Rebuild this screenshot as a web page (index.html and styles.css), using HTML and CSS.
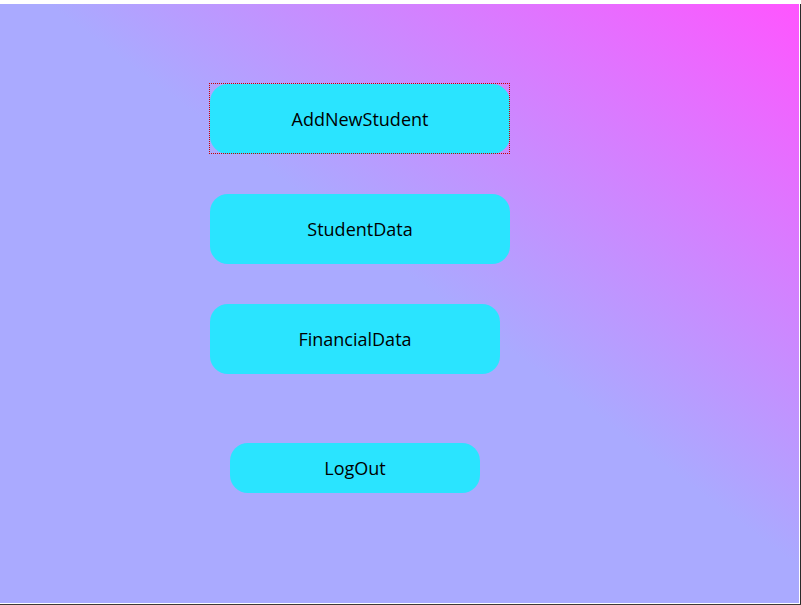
FILE: index.html
```html
<!DOCTYPE html>
<html>
<head>
<meta charset="utf-8">
<link rel="stylesheet" href="styles.css">
<title>Menu</title>
</head>
<body>
<div class="screen">
  <div class="form">
    <div class="menu">
      <button class="btn btn-wide focused">AddNewStudent</button>
      <button class="btn btn-wide">StudentData</button>
      <button class="btn btn-mid">FinancialData</button>
      <button class="btn btn-small">LogOut</button>
    </div>
  </div>
  <div class="edge-right"></div>
</div>
<div class="edge-bottom"></div>
</body>
</html>
```
FILE: styles.css
```css
html, body {
  margin: 0;
  padding: 0;
  background: #ffffff;
  width: 801px;
  height: 605px;
  overflow: hidden;
}
.screen {
  display: flex;
  margin-top: 4px;
  height: 600px;
}
.form {
  width: 799px;
  height: 599px;
  background: linear-gradient(to bottom left, #ff55ff 0%, #aaaaff 47%, #aaaaff 100%);
  box-sizing: border-box;
  padding: 80px 0 0 210px;
}
.edge-right {
  width: 1px;
  height: 600px;
  margin-left: 1px;
  background: #2a2a2a;
}
.edge-bottom {
  height: 1px;
  background: #3c3a34;
}
.menu {
  display: flex;
  flex-direction: column;
  align-items: flex-start;
}
.btn {
  position: relative;
  border: none;
  background: #2ae4ff;
  color: #000;
  font-family: "Open Sans", "Noto Sans", sans-serif;
  font-size: 18px;
  padding: 0;
  border-radius: 18px;
  margin: 0;
  cursor: pointer;
  outline: none;
}
.btn-wide {
  width: 300px;
  height: 70px;
  margin-bottom: 40px;
}
.btn-mid {
  width: 290px;
  height: 70px;
  margin-bottom: 69px;
}
.btn-small {
  width: 250px;
  height: 50px;
  margin-left: 20px;
}
.focused::after {
  content: "";
  position: absolute;
  left: -1px;
  top: -1px;
  right: 0;
  bottom: 0;
  border: 1px dotted #c80000;
}
```
